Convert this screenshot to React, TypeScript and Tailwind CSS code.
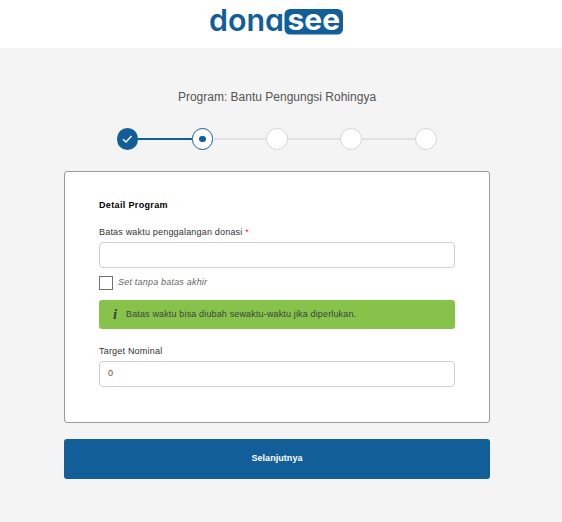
type StepState = 'done' | 'active' | 'todo';

const STEPS: StepState[] = ['done', 'active', 'todo', 'todo', 'todo'];

function Logo() {
  return (
    <svg
      width="136"
      height="48"
      viewBox="0 0 136 48"
      role="img"
      aria-label="donasee"
      fontFamily="Inter, sans-serif"
      className="[font-feature-settings:'cv11'_1]"
    >
      <rect x="75.5" y="9" width="58.5" height="25.5" rx="5.5" fill="#125e99" />
      <text x="0" y="30.8" fontSize="30.5" fontWeight="600" fill="#125e99" textLength="75" lengthAdjust="spacingAndGlyphs">dona</text>
      <text x="78.5" y="29.5" fontSize="28.5" fontWeight="700" fill="#fff" textLength="52.5" lengthAdjust="spacingAndGlyphs">see</text>
    </svg>
  );
}

function StepDot({ state }: { state: StepState }) {
  if (state === 'done') {
    return (
      <div className="flex h-[22px] w-[21px] shrink-0 items-center justify-center rounded-full bg-[#125e99]">
        <svg width="11" height="9" viewBox="0 0 11 9" fill="none" stroke="#fff" strokeWidth="1.4">
          <path d="M1 4.2 4 7 9.5 1" />
        </svg>
      </div>
    );
  }
  if (state === 'active') {
    return (
      <div className="flex h-[22px] w-[21px] shrink-0 items-center justify-center rounded-full border border-[#125e99] bg-white">
        <span className="h-1.5 w-[7px] rounded-full bg-[#125e99]" />
      </div>
    );
  }
  return <div className="h-[22px] w-[22px] shrink-0 rounded-full border border-[#d6d6d6] bg-white" />;
}

function Stepper() {
  return (
    <div className="mx-auto mt-[22px] flex w-[320px] items-center">
      {STEPS.map((state, i) => (
        <div key={i} className={i ? 'flex flex-1 items-center' : 'flex items-center'}>
          {i > 0 && <div className={`h-0.5 flex-1 ${i === 1 ? 'bg-[#125e99]' : 'bg-[#e2e2e2]'}`} />}
          <StepDot state={state} />
        </div>
      ))}
    </div>
  );
}

export default function App() {
  return (
    <div className="h-[522px] w-[562px] overflow-hidden bg-[#f4f4f4] font-['Liberation_Sans',Arial,sans-serif]">
      <header className="flex h-12 items-start bg-white pl-[209px]">
        <Logo />
      </header>

      <main className="ml-16 w-[426px]">
        <h1 className="mt-10 text-center text-[12px] leading-[18px] text-[#555]">
          Program: Bantu Pengungsi Rohingya
        </h1>
        <Stepper />

        <section className="mt-[21px] h-[252px] rounded-[3px] border border-[#9b9b9b] bg-white px-[34px] pt-[27px]">
          <h2 className="text-[9px] leading-3 font-bold tracking-[0.35px] text-black">Detail Program</h2>

          <label className="mt-[15px] block text-[9px] leading-3 tracking-[0.19px] text-[#333]">
            Batas waktu penggalangan donasi <span className="text-[#f03030]">*</span>
          </label>
          <input type="text" className="mt-1 block h-[26px] w-full rounded-[4px] border border-[#d0d0d0] px-2 text-[9px]" />

          <label className="mt-2 flex items-start gap-[5px] text-[9px] leading-3 tracking-[0.2px] text-[#666] italic">
            <input type="checkbox" className="size-3.5 appearance-none border border-[#707070] bg-white" />
            Set tanpa batas akhir
          </label>

          <div className="mt-2.5 flex h-[29px] items-center rounded-[3px] bg-[#87c34b] pl-3.5 text-[9px] text-[#3d4240]">
            <span className="w-[13px] font-['Liberation_Serif',serif] text-[15px] font-bold italic">i</span>
            <span className="tracking-[0.15px]">Batas waktu bisa diubah sewaktu-waktu jika diperlukan.</span>
          </div>

          <label className="mt-4 block text-[9px] leading-3 tracking-[0.2px] text-[#333]">Target Nominal</label>
          <input
            type="text"
            defaultValue="0"
            className="mt-1 block h-[26px] w-full rounded-[4px] border border-[#d0d0d0] px-2 pb-0.5 text-[9px] text-[#555]"
          />
        </section>

        <button className="mt-4 block h-10 w-full rounded-[3px] bg-[#125e99] pb-px text-[9px] font-bold tracking-[0.05px] text-white">
          Selanjutnya
        </button>
      </main>
    </div>
  );
}
